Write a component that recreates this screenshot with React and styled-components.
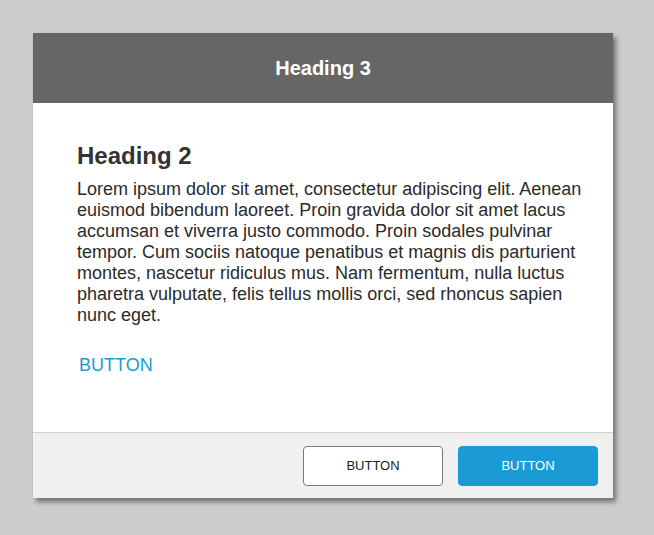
import React from "react";
import styled, { createGlobalStyle } from "styled-components";

const GlobalStyle = createGlobalStyle`
  html, body {
    margin: 0;
    padding: 0;
    background: #cdcdcd;
    font-family: "Liberation Sans", Arial, Helvetica, sans-serif;
  }
`;

const Page = styled.div`
  width: 654px;
  height: 535px;
  padding: 33px;
  box-sizing: border-box;
`;

const Card = styled.div`
  width: 580px;
  background: #fff;
  box-shadow: 3px 4px 5px rgba(0, 0, 0, 0.45);
  display: flex;
  flex-direction: column;
`;

const Header = styled.header`
  height: 70px;
  background: #666666;
  display: flex;
  align-items: center;
  justify-content: center;
`;

const Title = styled.h3`
  margin: 0;
  color: #fff;
  font-size: 20px;
  font-weight: 700;
`;

const Body = styled.div`
  padding: 38px 30px 56px 44px;
`;

const Heading = styled.h2`
  margin: 0 0 8px;
  font-size: 24px;
  font-weight: 700;
  color: #333;
  line-height: 30px;
`;

const Text = styled.p`
  margin: 0;
  font-size: 18px;
  line-height: 21px;
  color: #2b2b2b;
`;

const LinkButton = styled.button`
  display: block;
  margin-top: 28px;
  padding: 0 0 0 2px;
  border: none;
  background: none;
  font-family: inherit;
  font-size: 18px;
  line-height: 22px;
  color: #1a9bd7;
  cursor: pointer;
`;

const Footer = styled.footer`
  border-top: 1px solid #cfcfcf;
  background: #f0f0f0;
  height: 65px;
  padding: 0 15px;
  display: flex;
  align-items: center;
  justify-content: flex-end;
  gap: 15px;
`;

const Button = styled.button`
  width: 140px;
  height: 40px;
  border-radius: 4px;
  font-family: inherit;
  font-size: 13px;
  cursor: pointer;
  border: 1px solid ${(p) => (p.$primary ? "#1a9bd6" : "#7a7a7a")};
  background: ${(p) => (p.$primary ? "#1a9bd6" : "#fff")};
  color: ${(p) => (p.$primary ? "#fff" : "#222")};
`;

export default function App() {
  return (
    <Page>
      <GlobalStyle />
      <Card>
        <Header>
          <Title>Heading 3</Title>
        </Header>
        <Body>
          <Heading>Heading 2</Heading>
          <Text>
            Lorem ipsum dolor sit amet, consectetur adipiscing elit. Aenean
            euismod bibendum laoreet. Proin gravida dolor sit amet lacus
            accumsan et viverra justo commodo. Proin sodales pulvinar tempor.
            Cum sociis natoque penatibus et magnis dis parturient montes,
            nascetur ridiculus mus. Nam fermentum, nulla luctus pharetra
            vulputate, felis tellus mollis orci, sed rhoncus sapien nunc eget.
          </Text>
          <LinkButton>BUTTON</LinkButton>
        </Body>
        <Footer>
          <Button>BUTTON</Button>
          <Button $primary>BUTTON</Button>
        </Footer>
      </Card>
    </Page>
  );
}
